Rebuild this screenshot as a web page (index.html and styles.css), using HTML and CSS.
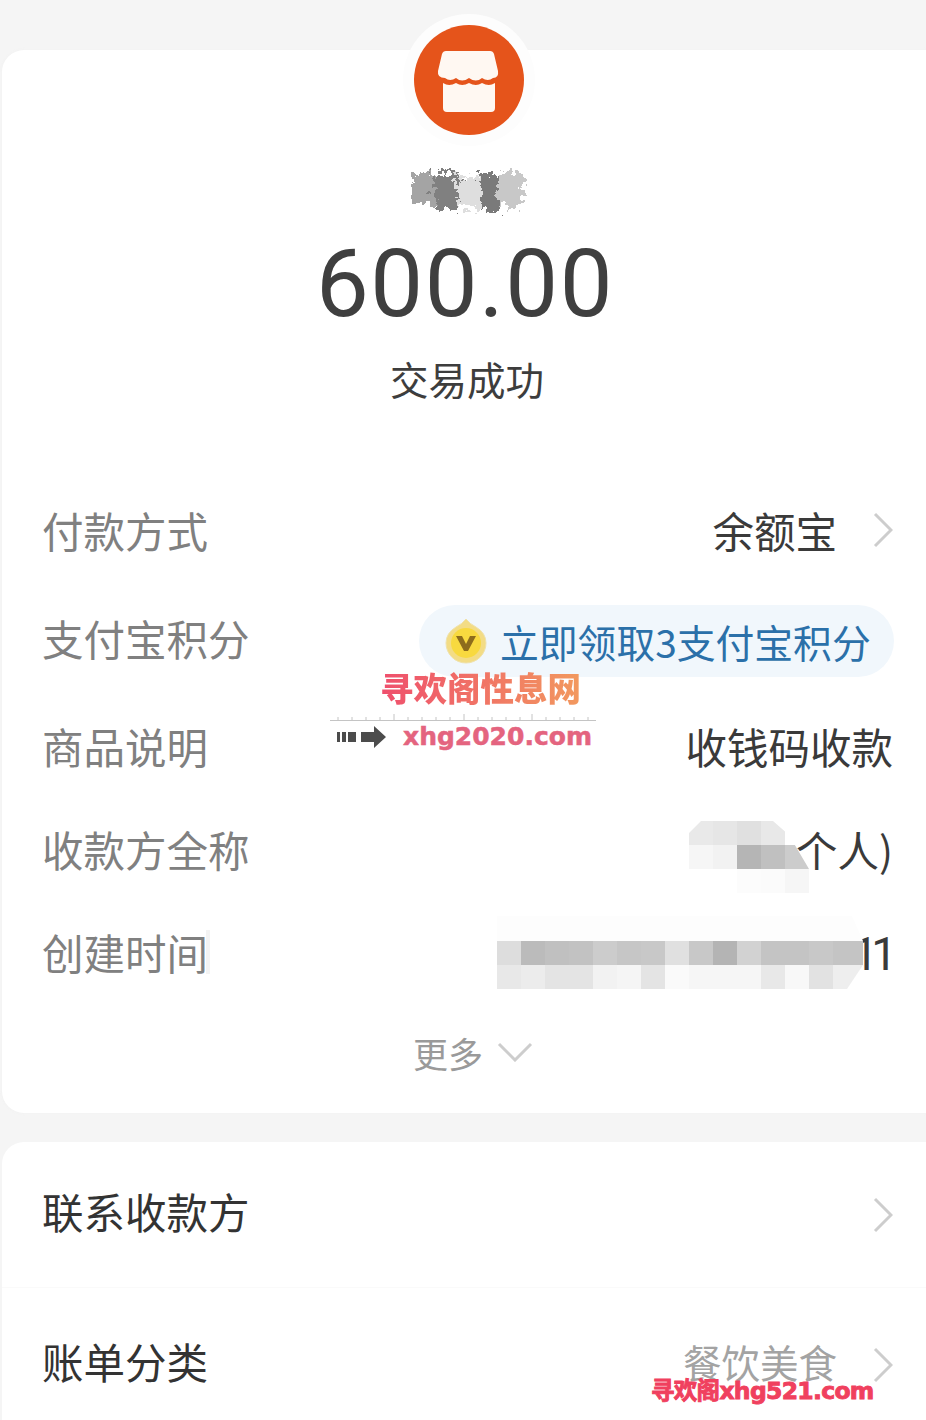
FILE: index.html
```html
<!DOCTYPE html>
<html lang="zh-CN">
<head>
<meta charset="utf-8">
<title>账单详情</title>
<link rel="stylesheet" href="styles.css">
</head>
<body>
<main class="page">
  <section class="card summary">
    <div class="logo-halo">
      <svg class="logo" viewBox="0 0 110 110" width="110" height="110" aria-hidden="true">
        <circle cx="55" cy="55" r="55" fill="#e5541b"/>
        <path d="M32 26H76Q79 26 80 29L84 46Q85 53 79 53Q74 57 68 53Q62 58 55 53Q48 58 42 53Q36 57 31 53Q23 53 24 46L28 29Q29 26 32 26Z" fill="#fff8f2"/>
        <path d="M29 58Q35 62 42 58Q48 62 55 58Q62 62 68 58Q75 62 81 58V83Q81 87 77 87H33Q29 87 29 83Z" fill="#fff8f2"/>
      </svg>
    </div>
    <svg class="name-blur" viewBox="0 0 120 50" width="120" height="50" aria-hidden="true">
      <defs>
        <filter id="scribble" x="-10%" y="-10%" width="120%" height="120%">
          <feTurbulence type="fractalNoise" baseFrequency="0.16" numOctaves="4" seed="9"/>
          <feDisplacementMap in="SourceGraphic" scale="22"/>
        </filter>
      </defs>
      <g filter="url(#scribble)">
        <rect x="4" y="8" width="28" height="30" fill="#a4a4a4"/>
        <rect x="28" y="6" width="24" height="38" fill="#808080"/>
        <rect x="50" y="10" width="24" height="32" fill="#dedede"/>
        <rect x="74" y="8" width="18" height="38" fill="#7a7a7a"/>
        <rect x="90" y="6" width="26" height="34" fill="#c8c8c8"/>
      </g>
    </svg>
    <div class="amount">600.00</div>
    <div class="status">交易成功</div>

    <div class="rows">
      <div class="row">
        <span class="label">付款方式</span>
        <span class="value with-arrow">余额宝
          <svg class="chev" viewBox="0 0 20 36" width="20" height="36" aria-hidden="true"><path d="M2 2l16 16L2 34"/></svg>
        </span>
      </div>
      <div class="row">
        <span class="label">支付宝积分</span>
        <span class="pill">
          <svg class="coin" viewBox="0 0 42 46" width="42" height="46" aria-hidden="true">
            <path d="M21 1q4 5 10 8 10 6 10 16a20 20 0 0 1-40 0Q1 15 11 9q6-3 10-8z" fill="#f3dc85" stroke="#efe2ac"/>
            <circle cx="21" cy="25" r="15" fill="#f8d93f"/>
            <path d="M11 18h6l4 8 4-8h6l-8 15h-4z" fill="#8d6c1c"/>
          </svg>
          <span>立即领取3支付宝积分</span>
        </span>
      </div>
      <div class="row">
        <span class="label">商品说明</span>
        <span class="value">收钱码收款</span>
      </div>
      <div class="row row-short">
        <span class="label">收款方全称</span>
        <span class="value">个人)</span>
      </div>
      <div class="row">
        <span class="label label-smudge">创建时间</span>
        <span class="value value-digits">11</span>
      </div>
    </div>
    <div class="more">
      <span>更多</span>
      <svg class="chev" viewBox="0 0 36 20" width="36" height="20" aria-hidden="true"><path d="M2 2l16 16L34 2"/></svg>
    </div>
  </section>

  <section class="card actions">
    <div class="action action-first">
      <span class="action-label">联系收款方</span>
      <svg class="chev" viewBox="0 0 20 36" width="20" height="36" aria-hidden="true"><path d="M2 2l16 16L2 34"/></svg>
    </div>
    <div class="action action-second">
      <span class="action-label">账单分类</span>
      <span class="category">餐饮美食
        <svg class="chev" viewBox="0 0 20 36" width="20" height="36" aria-hidden="true"><path d="M2 2l16 16L2 34"/></svg>
      </span>
    </div>
  </section>

  <svg class="mosaic mosaic-name" viewBox="0 0 120 72" width="120" height="72" shape-rendering="crispEdges" aria-hidden="true">
    <rect x="0" y="0" width="24" height="24" fill="#e9e9e9"/>
    <rect x="24" y="0" width="24" height="24" fill="#e6e6e6"/>
    <rect x="48" y="0" width="24" height="24" fill="#e0e0e0"/>
    <rect x="72" y="0" width="24" height="24" fill="#e8e8e8"/>
    <rect x="0" y="24" width="24" height="24" fill="#f6f6f6"/>
    <rect x="24" y="24" width="24" height="24" fill="#f2f2f2"/>
    <rect x="48" y="24" width="24" height="24" fill="#b5b5b5"/>
    <rect x="72" y="24" width="24" height="24" fill="#c0c0c0"/>
    <rect x="96" y="24" width="24" height="24" fill="#cccccc"/>
    <rect x="48" y="48" width="24" height="24" fill="#fcfcfc"/>
    <rect x="72" y="48" width="24" height="24" fill="#fbfbfb"/>
    <rect x="96" y="48" width="24" height="24" fill="#f6f6f6"/>
  </svg>

  <svg class="mosaic mosaic-time" viewBox="0 0 366 73" width="366" height="73" shape-rendering="crispEdges" aria-hidden="true">
    <rect x="0" y="0" width="366" height="25" fill="#fdfdfd"/>
    <rect x="0" y="25" width="24" height="24" fill="#dddddd"/>
    <rect x="24" y="25" width="24" height="24" fill="#bbbbbb"/>
    <rect x="48" y="25" width="24" height="24" fill="#c0c0c0"/>
    <rect x="72" y="25" width="24" height="24" fill="#c2c2c2"/>
    <rect x="96" y="25" width="24" height="24" fill="#cccccc"/>
    <rect x="120" y="25" width="24" height="24" fill="#c6c6c6"/>
    <rect x="144" y="25" width="24" height="24" fill="#c8c8c8"/>
    <rect x="168" y="25" width="24" height="24" fill="#e0e0e0"/>
    <rect x="192" y="25" width="24" height="24" fill="#c8c8c8"/>
    <rect x="216" y="25" width="24" height="24" fill="#b4b4b4"/>
    <rect x="240" y="25" width="24" height="24" fill="#d2d2d2"/>
    <rect x="264" y="25" width="24" height="24" fill="#c4c4c4"/>
    <rect x="288" y="25" width="24" height="24" fill="#c4c4c4"/>
    <rect x="312" y="25" width="24" height="24" fill="#c8c8c8"/>
    <rect x="336" y="25" width="30" height="24" fill="#c4c4c4"/>
    <rect x="0" y="49" width="24" height="24" fill="#e8e8e8"/>
    <rect x="24" y="49" width="24" height="24" fill="#ececec"/>
    <rect x="48" y="49" width="24" height="24" fill="#e4e4e4"/>
    <rect x="72" y="49" width="24" height="24" fill="#e4e4e4"/>
    <rect x="96" y="49" width="24" height="24" fill="#f2f2f2"/>
    <rect x="120" y="49" width="24" height="24" fill="#f5f5f5"/>
    <rect x="144" y="49" width="24" height="24" fill="#e4e4e4"/>
    <rect x="168" y="49" width="24" height="24" fill="#fafafa"/>
    <rect x="192" y="49" width="24" height="24" fill="#f6f6f6"/>
    <rect x="216" y="49" width="24" height="24" fill="#f6f6f6"/>
    <rect x="240" y="49" width="24" height="24" fill="#f6f6f6"/>
    <rect x="264" y="49" width="24" height="24" fill="#e8e8e8"/>
    <rect x="288" y="49" width="24" height="24" fill="#f8f8f8"/>
    <rect x="312" y="49" width="24" height="24" fill="#e2e2e2"/>
    <rect x="336" y="49" width="30" height="24" fill="#eeeeee"/>
  </svg>

  <div class="wm-center">
    <div class="wm-title">寻欢阁性息网</div>
    <svg class="wm-ruler" viewBox="0 0 266 8" width="266" height="8" aria-hidden="true">
      <path d="M0 7.5h266M8 4v3M22 4v3M36 4v3M50 4v3M64 1v6M78 4v3M92 4v3M106 4v3M120 4v3M134 1v6M148 4v3M162 4v3M176 4v3M190 4v3M202 1v6M216 4v3M230 4v3M244 4v3M258 4v3" stroke="#c4c4c4" fill="none"/>
    </svg>
    <div class="wm-link">
      <svg class="wm-arrow" viewBox="0 0 50 22" width="50" height="22" aria-hidden="true">
        <path d="M0 6h3v10H0zM5 6h4v10H5zM11 6h8v10h-8zM24 6h13V0l12 11-12 11v-6H24z" fill="#4c4c4c"/>
      </svg>
      <span class="wm-url">xhg2020.com</span>
    </div>
  </div>

  <div class="wm-bottom">寻欢阁xhg521.com</div>
</main>
</body>
</html>
```

FILE: styles.css
```css
* { box-sizing: border-box; }

html, body {
  margin: 0;
  padding: 0;
}

body {
  background: #f5f5f5;
  font-family: "Noto Sans CJK SC", "Noto Sans", sans-serif;
  overflow: hidden;
}

.page {
  position: relative;
  width: 926px;
  height: 1420px;
  padding: 50px 0 0 2px;
  overflow: hidden;
}

.card {
  background: #fff;
  border-radius: 22px 0 0 22px;
}

.summary {
  height: 1063px;
  display: flex;
  flex-direction: column;
  align-items: stretch;
  box-shadow: 0 0 3px rgba(240, 240, 240, 0.8);
}

.logo-halo {
  align-self: flex-start;
  margin: -36px 0 0 401px;
  width: 132px;
  height: 132px;
  border-radius: 50%;
  background: #fdfdfd;
  display: flex;
  align-items: center;
  justify-content: center;
  flex: none;
}

.logo { display: block; }

.name-blur {
  align-self: flex-start;
  margin: 20px 0 0 405px;
  flex: none;
}

.amount {
  margin-top: 13px;
  padding-left: 2px;
  text-align: center;
  font-family: Roboto, "Noto Sans", sans-serif;
  font-size: 94px;
  line-height: 110px;
  letter-spacing: 1.5px;
  color: #3f3f3f;
  height: 110px;
}

.status {
  margin-top: 14px;
  padding-left: 6px;
  text-align: center;
  font-size: 38.5px;
  line-height: 50px;
  color: #3d3d3d;
}

.rows {
  margin-top: 73px;
  display: flex;
  flex-direction: column;
}

.row {
  height: 108px;
  padding: 0 33px 0 40px;
  display: flex;
  align-items: center;
  justify-content: space-between;
  flex: none;
}

.row-short { height: 98px; }

.label {
  font-size: 41.5px;
  line-height: 56px;
  color: #808080;
}

.label-smudge {
  position: relative;
}

.label-smudge::after {
  content: "";
  position: absolute;
  right: -2px;
  top: 6px;
  width: 4px;
  height: 44px;
  background: #f3f3f3;
}

.value {
  font-size: 41.5px;
  line-height: 56px;
  color: #3a3a3a;
  position: relative;
}

.value-digits {
  font-family: Roboto, sans-serif;
  font-size: 46px;
  letter-spacing: -7px;
  margin: 4px 3px 0 0;
}

.with-arrow {
  display: flex;
  align-items: center;
  gap: 36px;
}

.chev {
  display: block;
  fill: none;
  stroke: #cdcdcd;
  stroke-width: 3;
  flex: none;
}

.pill {
  width: 475px;
  height: 72px;
  margin: 6px -1px 0 0;
  border-radius: 36px;
  background: #f1f7fc;
  padding-left: 26px;
  display: flex;
  align-items: center;
  gap: 13px;
  font-size: 38.8px;
  color: #2b70a9;
  white-space: nowrap;
}

.coin {
  display: block;
  flex: none;
}

.more {
  height: 88px;
  padding: 4px 0 0 411px;
  display: flex;
  align-items: center;
  gap: 14px;
  font-size: 35px;
  color: #9a9a9a;
}

.actions {
  margin-top: 29px;
  height: 300px;
  border-radius: 22px 0 0 0;
}

.action {
  padding: 0 33px 0 40px;
  display: flex;
  align-items: center;
  justify-content: space-between;
}

.action-first {
  height: 146px;
  padding-bottom: 8px;
  border-bottom: 1px solid #fafafa;
}

.action-first .chev {
  margin-top: 8px;
}

.action-second {
  height: 132px;
  padding-top: 14px;
}

.action-label {
  font-size: 41.5px;
  line-height: 56px;
  color: #333;
}

.category {
  display: flex;
  align-items: center;
  gap: 36px;
  font-size: 38.5px;
  line-height: 50px;
  color: #a3a3a3;
}

.category .chev {
  margin-top: 8px;
}

.mosaic {
  position: absolute;
  display: block;
}

.mosaic-name {
  left: 689px;
  top: 821px;
  clip-path: polygon(12px 0, 84px 0, 100px 14px, 120px 48px, 120px 72px, 48px 72px, 48px 48px, 0 48px, 0 12px);
}

.mosaic-time {
  left: 497px;
  top: 916px;
  clip-path: polygon(0 0, 355px 0, 366px 25px, 366px 49px, 350px 73px, 0 73px);
}

.wm-center {
  position: absolute;
  left: 330px;
  top: 664px;
  width: 270px;
}

.wm-title {
  margin-left: 50px;
  width: 204px;
  font-family: "Noto Sans CJK SC", sans-serif;
  font-weight: 900;
  font-size: 33.5px;
  line-height: 46px;
  white-space: nowrap;
  color: transparent;
  background: linear-gradient(90deg, #ef4f6d, #f29a5e);
  background-clip: text;
  -webkit-background-clip: text;
}

.wm-ruler {
  display: block;
  margin-top: 3px;
}

.wm-link {
  margin: 1px 0 0 7px;
  display: flex;
  align-items: center;
  gap: 16px;
}

.wm-arrow { display: block; flex: none; }

.wm-url {
  font-family: "DejaVu Sans", sans-serif;
  font-weight: 700;
  font-size: 25px;
  line-height: 30px;
  color: #e4647f;
  -webkit-text-stroke: 0.5px #e4647f;
}

.wm-bottom {
  position: absolute;
  left: 651px;
  top: 1373px;
  font-family: "DejaVu Sans", "Noto Sans CJK SC", sans-serif;
  font-weight: 700;
  font-size: 23.5px;
  line-height: 36px;
  letter-spacing: -0.7px;
  white-space: nowrap;
  color: #f0405e;
  -webkit-text-stroke: 0.9px #f0405e;
}
```
